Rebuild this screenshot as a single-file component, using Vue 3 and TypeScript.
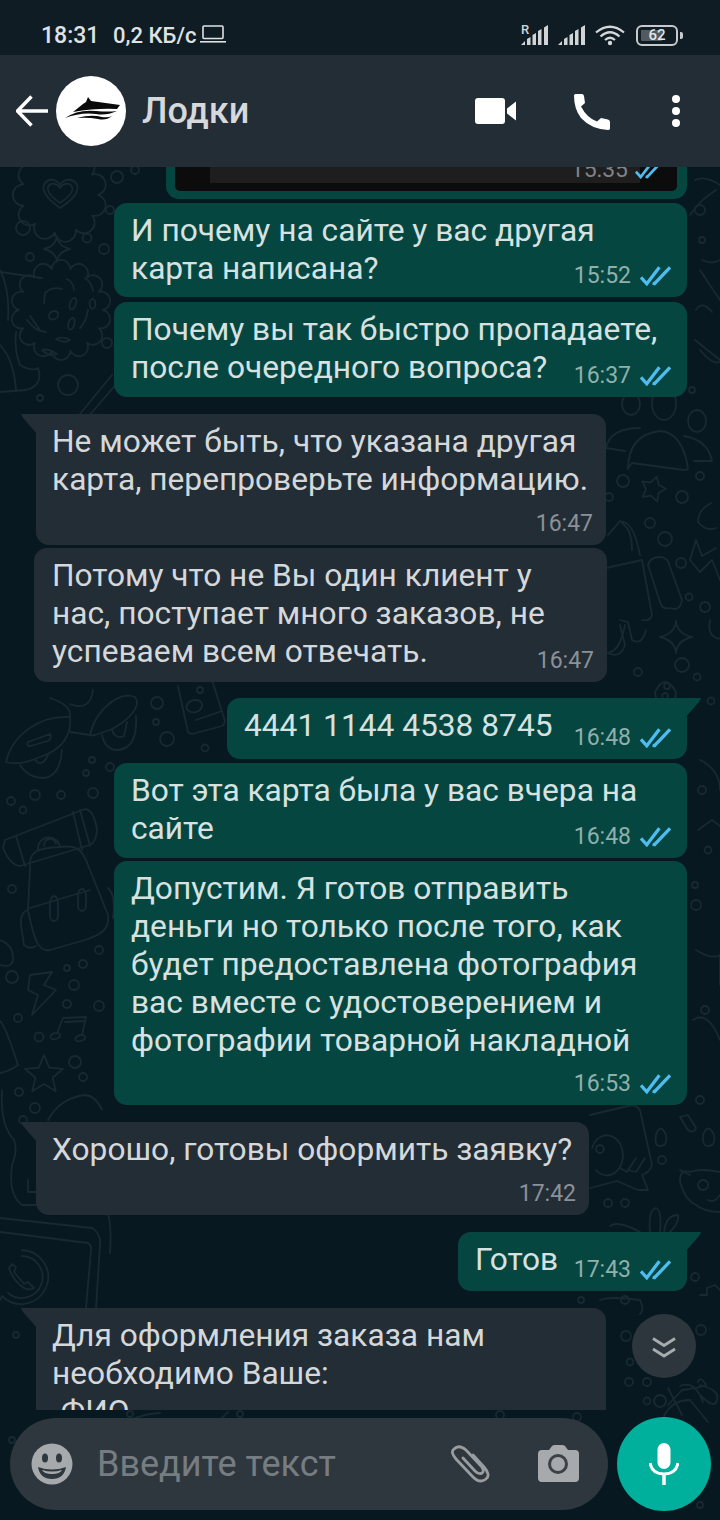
<script setup lang="ts">
interface Msg { id: number; out: boolean; text: string; time: string; w: number; h: number; gap: number; left?: number; tail?: boolean }

const messages: Msg[] = [
  { id: 1, out: true, text: 'И почему на сайте у вас другая\nкарта написана?', time: '15:52', w: 573, h: 94, gap: 4 },
  { id: 2, out: true, text: 'Почему вы так быстро пропадаете,\nпосле очередного вопроса?', time: '16:37', w: 573, h: 95, gap: 5 },
  { id: 3, out: false, text: 'Не может быть, что указана другая\nкарта, перепроверьте информацию.', time: '16:47', w: 570, h: 131, gap: 17, left: 36, tail: true },
  { id: 4, out: false, text: 'Потому что не Вы один клиент у\nнас, поступает много заказов, не\nуспеваем всем отвечать.', time: '16:47', w: 573, h: 134, gap: 3, left: 34 },
  { id: 5, out: true, text: '4441 1144 4538 8745', time: '16:48', w: 460, h: 61, gap: 16, tail: true },
  { id: 6, out: true, text: 'Вот эта карта была у вас вчера на\nсайте', time: '16:48', w: 573, h: 95, gap: 4 },
  { id: 7, out: true, text: 'Допустим. Я готов отправить\nденьги но только после того, как\nбудет предоставлена фотография\nвас вместе с удостоверением и\nфотографии товарной накладной', time: '16:53', w: 573, h: 244, gap: 3 },
  { id: 8, out: false, text: 'Хорошо, готовы оформить заявку?', time: '17:42', w: 553, h: 93, gap: 17, left: 36, tail: true },
  { id: 9, out: true, text: 'Готов', time: '17:43', w: 229, h: 59, gap: 17, tail: true },
  { id: 10, out: false, text: 'Для оформления заказа нам\nнеобходимо Ваше:\n-ФИО', time: '', w: 570, h: 140, gap: 17, left: 36, tail: true },
]

function bubbleStyle(m: Msg) {
  return {
    width: m.w + 'px',
    height: m.h + 'px',
    marginTop: m.gap + 'px',
    marginLeft: m.out ? undefined : m.left + 'px',
    paddingLeft: m.out ? undefined : 52 - (m.left as number) + 'px',
  }
}

function scallop(cx: number, cy: number, r: number, n: number): string {
  let d = ''
  const rb = (Math.PI * r) / n * 0.72
  for (let i = 0; i <= n; i++) {
    const a = (i / n) * Math.PI * 2
    const x = (cx + r * Math.cos(a)).toFixed(1)
    const y = (cy + r * Math.sin(a)).toFixed(1)
    d += i === 0 ? `M${x} ${y}` : ` A${rb.toFixed(1)} ${rb.toFixed(1)} 0 0 1 ${x} ${y}`
  }
  return d + 'Z'
}

function star(cx: number, cy: number, R: number, r: number, rot: number): string {
  const pts: string[] = []
  for (let i = 0; i < 10; i++) {
    const rad = i % 2 === 0 ? R : r
    const a = rot + (i * Math.PI) / 5 - Math.PI / 2
    pts.push(`${(cx + rad * Math.cos(a)).toFixed(1)} ${(cy + rad * Math.sin(a)).toFixed(1)}`)
  }
  return 'M' + pts.join(' L') + 'Z'
}

function sparkle(cx: number, cy: number, s: number): string {
  const k = s * 0.22
  return `M${cx} ${cy - s} Q${cx + k * 0.3} ${cy - k} ${cx + s} ${cy} Q${cx + k * 0.3} ${cy + k} ${cx} ${cy + s} Q${cx - k * 0.3} ${cy + k} ${cx - s} ${cy} Q${cx - k * 0.3} ${cy - k} ${cx} ${cy - s}Z`
}

const circles: number[][] = [
  [117, 177, 6], [23, 228, 7], [87, 238, 4.5], [104, 249, 5], [30, 257, 4], [110, 210, 4], [135, 170, 4],
  [107, 343, 5], [68, 385, 10], [40, 398, 3],
  [157, 703, 6], [156, 722, 3], [167, 739, 7], [205, 748, 3.5], [92, 760, 3], [86, 773, 3], [110, 767, 4],
  [93, 793, 5], [35, 795, 5], [61, 795, 4], [11, 801, 4], [23, 810, 3.5], [12, 889, 4], [99, 950, 4],
  [67, 968, 3], [83, 964, 4], [12, 977, 6], [74, 985, 5],
  [18, 1018, 4], [39, 1037, 4.5], [75, 1062, 6], [83, 1077, 4], [19, 1092, 4], [35, 1108, 5], [23, 1120, 4], [67, 1004, 4], [99, 1006, 5],
  [623, 481, 6], [700, 476, 4], [682, 497, 6], [609, 497, 4], [650, 523, 5], [665, 539, 7], [681, 563, 5],
  [689, 597, 3.5], [638, 672, 4], [682, 665, 7], [697, 677, 3.5], [711, 701, 3.5], [667, 686, 3],
  [662, 1160, 4], [608, 1203, 4], [625, 1203, 4], [692, 390, 3],
  [625, 1300, 4], [581, 1300, 3], [626, 1336, 5], [630, 1362, 3.5], [629, 1382, 4], [647, 1382, 4], [647, 1401, 3.5],
  [701, 1330, 5], [695, 1277, 4], [700, 1505, 3], [16, 1335, 3], [12, 1440, 3], [130, 1414, 3], [240, 1414, 3], [500, 1415, 4], [577, 1417, 4],
  [700, 210, 5], [702, 240, 3], [696, 905, 5], [705, 1010, 4], [700, 1100, 4], [702, 790, 4], [695, 885, 3], [708, 850, 3.5], [200, 690, 3],
]

const paths: string[] = [
  scallop(60, 195, 38, 11),
  'M60 208 C46 198 42 191 44 185 C47 178 56 178 60 185 C64 178 74 178 77 185 C79 191 74 199 60 208Z',
  'M60 203 C50 196 47 191 48 187 C50 182 57 183 60 188 C63 183 70 182 72 187 C74 191 70 196 60 203Z',
  sparkle(57, 249, 13),
  scallop(61, 310, 42, 14),
  'M45 293 Q52 286 62 289 M45 293 L44 303',
  'M67 279 Q74 283 74 290',
  'M85 278 Q92 283 93 291',
  'M74 298 a3 6 20 1 0 1 0Z',
  'M92 299 a3 5 0 1 0 1 0Z',
  'M54 311 a5 4 -30 1 0 1 0Z',
  'M72 318 a3 6 15 1 0 1 0Z',
  'M88 310 Q86 322 80 328',
  'M27 320 Q36 332 46 332 M30 316 L40 330',
  'M56 339 Q64 336 70 340 Q64 344 56 339Z',
  'M42 350 Q50 358 57 354 Q48 348 42 350Z',
  'M0 270 Q10 290 8 320 M0 272 L42 278',
  'M0 345 Q14 360 16 390 M16 332 Q14 350 20 365 Q32 372 38 368 Q44 385 26 390 L0 392',
  'M75 420 L112 375 M82 424 L118 382 M75 420 Q78 428 88 430',
  'M6 762 C12 735 40 715 70 717 C72 735 62 750 40 757 Q20 766 6 762Z',
  'M28 742 L50 734 Q52 738 48 741 L30 746 Q26 746 28 742Z',
  'M20 765 Q28 778 44 778 Q60 776 62 750',
  'M35 760 Q42 768 48 755',
  'M70 717 Q72 705 50 698 M70 732 L90 735',
  'M90 735 C95 710 120 690 135 697 C142 705 130 720 110 730 C100 733 92 737 90 735Z',
  'M102 735 Q105 750 118 750 Q138 748 136 716',
  'M112 730 Q116 740 124 736 L127 722',
  'M93 690 Q90 712 70 704',
  'M5 840 L85 809 Q94 810 97 830 Q96 842 90 845 L20 866 Q10 865 3 848Z',
  'M16 836 L25 866 M73 812 L82 850 M80 810 L90 846',
  'M30 868 C28 850 40 848 60 847 C75 845 82 848 88 865 L108 915 C110 930 100 935 85 940 L50 950 C40 952 35 945 28 910Z',
  'M38 850 a11 11 0 0 1 22 -3 M44 846 a6 6 0 0 1 12 -2',
  'M30 908 L90 890 M108 888 Q116 895 113 918 M28 910 Q20 912 21 925 L24 945 Q30 950 36 946',
  'M50 904 a4 8 0 0 1 8 0 v12 a4 5 0 0 1 -8 0Z',
  'M78 896 a4 6 0 0 1 8 -2 v12 a4 5 0 0 1 -8 0Z',
  'M178 686 L188 732 Q190 735 196 733 L222 726 Q226 724 224 718 L212 680',
  'M195 700 a8 6 -15 1 0 1 0Z M196 720 L222 711',
  'M30 975 L52 972 L44 985 L56 990 L32 1015 L38 995 L28 990Z',
  'M0 940 Q14 945 13 960 Q12 968 0 965',
  star(44, 1075, 20, 9, 0),
  'M57 1033 L63 1018 L86 1017 L82 1035 M65 1022 L85 1021',
  'M57 1033 a5 3 -15 1 1 -1 0Z M82 1035 a5 3 -15 1 1 -1 0Z',
  'M0 1021 Q5 1025 18 1065 Q8 1072 0 1073',
  'M2 1090 Q0 1125 14 1140 Q18 1150 12 1165 Q8 1195 22 1205 L36 1205',
  'M48 1120 Q60 1098 85 1095 Q96 1096 102 1110 M28 1180 v12 h8',
  'M0 1218 L92 1228 Q101 1233 100 1245 L96 1308 M0 1232 L88 1243 Q92 1246 91 1250 L86 1308',
  'M22 1250 a27 27 0 1 1 -20 46 L0 1300 M22 1256 a21 21 0 1 1 -14 37',
  'M9 1268 Q12 1278 20 1285 Q28 1292 34 1288 L28 1282 L24 1284 L14 1272 L16 1267 L12 1264Z',
  'M110 1253 Q112 1225 107 1210 M110 1205 Q100 1195 93 1185 Q90 1170 104 1158',
  'M622 404 a9 11 0 1 0 18 0 a9 11 0 1 0 -18 0Z',
  'M652 404 a12 16 0 1 0 24 0 a12 18 0 1 0 -24 0Z',
  'M688 421 a9 11 0 1 0 18 0 a9 11 0 1 0 -18 0Z',
  'M628 469 Q628 435 660 431 Q682 432 688 468 Q688 470 684 470 L632 463Q628 468 628 469Z',
  'M606 448 Q610 428 640 428 M606 448 L625 451 M684 436 Q708 440 712 461 L694 461',
  star(653, 489, 13, 7, 0.3),
  'M608 535 L620 521 L624 522 Q634 525 640 555 M622 523 Q632 530 632 550',
  'M606 568 L642 560 L652 615 Q650 622 642 620 M620 620 L628 622 L632 640 Q642 646 646 630 M625 625 Q620 650 610 652 M606 652 Q620 660 625 645 L620 625',
  'M648 565 Q650 557 660 557 Q668 557 670 567 L682 600 Q680 612 670 608 Q662 610 660 602Z',
  sparkle(676, 637, 16),
  'M696 540 L690 560 L700 572 L712 560 L720 580 M696 540 L702 556 L716 548',
  'M711 503 Q698 510 698 522 Q706 532 716 528',
  'M655 692 Q665 672 676 692 Q676 702 668 712 Q655 702 655 692Z M665 693 a3 3 0 1 0 .1 0Z',
  'M705 612 a5 5 0 1 1 .1 0Z M710 620 Q708 630 712 635 Q718 640 720 638',
  'M590 1115 L632 1105 Q636 1105 640 1110 L652 1165 Q650 1172 642 1175 L648 1190 L638 1190 L617 1181 L590 1188',
  'M620 1168 L627 1172 L636 1158 M628 1170 L636 1172 L645 1158',
  'M592 1148 a16 20 0 1 1 4 22 M600 1145 a4 4 0 1 1 -.1 0',
  'M656 1135 Q660 1122 666 1135 Q668 1146 660 1146 Q654 1146 656 1135Z',
  'M703 1135 Q708 1122 714 1135 Q716 1146 708 1146 Q702 1146 703 1135Z',
  'M680 1117 L688 1115 L696 1128 Q694 1134 688 1130Z',
  'M680 1182 Q680 1168 690 1172 Q700 1168 720 1172 M680 1182 Q685 1200 696 1205 Q705 1212 720 1212 M690 1175 L680 1170',
  'M703 1190 a5 5 0 1 1 .1 0Z M708 1200 Q714 1204 720 1195',
  'M650 1232 Q648 1210 656 1208 Q662 1210 660 1232 M664 1232 Q666 1215 678 1215 Q680 1222 668 1234 M610 1226 Q618 1220 640 1232',
  'M600 1300 Q610 1296 640 1300 Q645 1310 640 1314 M700 1295 L707 1295 L707 1288 L715 1285 L720 1290',
  'M668 1405 L682 1390 Q700 1388 706 1385 Q700 1375 698 1382 M664 1416 Q672 1400 690 1400 L708 1422',
  'M660 1395 a6 6 0 1 0 .1 0Z M668 1388 L682 1415',
  'M680 1386 Q695 1380 703 1402 M700 1395 Q715 1410 717 1400 Q720 1390 700 1385',
  'M690 215 Q700 200 716 190 M695 180 Q705 175 720 185',
  'M702 260 Q712 265 720 260 M700 270 L720 300 M695 340 L720 360 M700 350 Q712 365 720 362',
  'M696 310 Q702 300 712 312',
  'M700 760 Q720 770 720 790 M698 830 L712 820 L720 826 M696 950 Q712 960 720 955 L720 985 M693 1020 Q708 1010 720 1040',
  'M120 1430 Q130 1415 160 1413 M220 1420 L228 1412',
]
</script>

<template>
  <div class="phone">
    <div class="status">
      <div class="status-left">
        <span class="clock">18:31</span>
        <span class="speed">0,2 КБ/с</span>
        <svg class="laptop" viewBox="0 0 26 18" width="26" height="18" fill="none" stroke="#dfe2e4" stroke-width="1.6">
          <rect x="3" y="1" width="20" height="12.5" rx="1" />
          <path d="M0 16.8H26" />
        </svg>
      </div>
      <div class="status-right">
        <span class="sim">
          <span class="r">R</span>
          <svg viewBox="0 0 28 20" width="28" height="20" fill="#d0d4d6">
            <path d="M0 20l4-4v4zM6 14l3.5-2v8H6zM11.5 10l3.5-2v12h-3.500zM17 6l3.500-2v16H17zM23 2.500L27 0v20h-4z" />
          </svg>
        </span>
        <svg viewBox="0 0 28 20" width="28" height="20" fill="#d0d4d6">
          <path d="M0 20l4-4v4zM6 14l3.500-2v8H6zM11.500 10l3.500-2v12h-3.500zM17 6l3.500-2v16H17zM23 2.500L27 0v20h-4z" />
        </svg>
        <svg viewBox="0 0 30 22" width="30" height="22" fill="none" stroke="#d4d8da" stroke-width="2.200">
          <path d="M1 8.500Q15-3 29 8.500M5.500 12.500Q15 4 24.500 12.500M10 16Q15 11.500 20 16" />
          <circle cx="15" cy="19" r="2.200" fill="#d4d8da" stroke="none" />
        </svg>
        <span class="battery">
          <span class="battery-fill"></span>
          <span class="battery-text">62</span>
        </span>
        <span class="battery-nub"></span>
      </div>
    </div>

    <header class="header">
      <svg class="back" viewBox="0 0 32 32" width="32" height="32" fill="none" stroke="#fff" stroke-width="3.400">
        <path d="M32 16H2M15.500 1.500L1.500 16l14 14.500" />
      </svg>
      <div class="avatar">
        <svg viewBox="0 0 70 70" width="70" height="70" fill="#0a0a0a">
          <path d="M17 36L27 28L30 26L32 21L35 25L64 29L61 33Q40 32 17 36Z" />
          <path d="M9 42Q22 33 40 35Q52 36 61 35Q50 40 40 38Q25 36 9 42Z" />
          <path d="M21 42Q35 38 46 41Q52 42 56 40Q50 45 42 43Q32 41 21 42Z" />
        </svg>
      </div>
      <span class="title">Лодки</span>
      <svg class="video" viewBox="0 0 41 26" width="41" height="26" fill="#fff">
        <rect x="0" y="0" width="30" height="26" rx="3" />
        <path d="M32 10.500L41 3.500v19l-9-7z" />
      </svg>
      <svg class="call" viewBox="0 0 37 37" width="37" height="37" fill="#fff">
        <path d="M1 2.500Q1 1 2.500 1H9Q10.500 1 11 3L12 10L8 13.500Q14 25 24 28.500L28 25L35 26.500Q37 27 37 29V35.500Q37 37 35 37Q18 36 8 25Q1 16 1 2.500Z" />
      </svg>
      <div class="dots"><i></i><i></i><i></i></div>
    </header>

    <main class="chat">
      <svg class="doodles" viewBox="0 167 720 1353" width="720" height="1353" fill="none" stroke="#182932" stroke-width="1.800" stroke-linejoin="round" stroke-linecap="round" aria-hidden="true">
        <circle v-for="(c, i) in circles" :key="'c' + i" :cx="c[0]" :cy="c[1]" :r="c[2]" />
        <path v-for="(d, i) in paths" :key="'p' + i" :d="d" />
      </svg>

      <div class="messages">
        <div class="image-bubble">
          <div class="image-frame">
            <div class="image-inner"></div>
            <span class="image-time">15:35</span>
            <svg class="ticks image-ticks" viewBox="0 0 32 20" width="26" height="17" fill="none" stroke="#4fbcf0" stroke-width="3.400">
              <path d="M1 11.500L7 18L20 1M13 17.500L15 18L31 1" />
            </svg>
          </div>
        </div>

        <div
          v-for="m in messages"
          :key="m.id"
          class="bubble"
          :class="[m.out ? 'out' : 'in', { tail: m.tail }]"
          :style="bubbleStyle(m)"
        >
          <div class="text">
            <div v-for="(line, i) in m.text.split('\n')" :key="i" class="line">{{ line }}</div>
          </div>
          <div v-if="m.time" class="meta">
            <span class="time">{{ m.time }}</span>
            <svg v-if="m.out" class="ticks" viewBox="0 0 32 20" width="31" height="20" fill="none" stroke="#4fbcf0" stroke-width="3.400">
              <path d="M1 11.500L7 18L20 1M13 17.500L15 18L31 1" />
            </svg>
          </div>
        </div>
      </div>

      <button class="scroll-down">
        <svg viewBox="0 0 24 24" width="26" height="24" fill="none" stroke="#a8acae" stroke-width="2.800">
          <path d="M1 2.500L12 9.500L23 2.500M1 13L12 20L23 13" />
        </svg>
      </button>

      <footer class="composer">
        <div class="pill">
          <svg class="emoji" viewBox="0 0 42 42" width="42" height="42">
            <circle cx="21" cy="21" r="20.500" fill="#a7aaac" />
            <ellipse cx="14" cy="15" rx="3" ry="4.500" fill="#2e373d" />
            <ellipse cx="28" cy="15" rx="3" ry="4.500" fill="#2e373d" />
            <path d="M7 24Q21 29 35 24Q33 36 21 36Q9 36 7 24Z" fill="#2e373d" />
            <path d="M11 27Q21 30 31 27Q29 31 21 31Q13 31 11 27Z" fill="#a7aaac" />
          </svg>
          <span class="placeholder">Введите текст</span>
          <svg class="clip" viewBox="0 0 42 38" width="42" height="38" fill="none" stroke="#9a9da0" stroke-width="2.800" stroke-linecap="round">
            <path d="M23 10L34 22Q41 30 36 34Q30 39 23 32L6 14Q0 7 4 4Q9-1 16 5L31 21Q35 26 32 28Q29 30 25 26L13 13" />
          </svg>
          <svg class="camera" viewBox="0 0 41 37" width="41" height="37">
            <path d="M4 5H11L14 1Q15 0 17 0H24Q26 0 27 1L30 5H37Q41 5 41 9V33Q41 37 37 37H4Q0 37 0 33V9Q0 5 4 5Z" fill="#a7aaac" />
            <circle cx="20" cy="19" r="8.500" fill="none" stroke="#3a4248" stroke-width="3" />
          </svg>
        </div>
        <button class="mic">
          <svg viewBox="0 0 30 42" width="30" height="42" fill="none">
            <rect x="8.500" y="0" width="13" height="26" rx="6.500" fill="#fff" />
            <path d="M1 20Q3 31 15 31Q27 31 29 20" stroke="#fff" stroke-width="3" />
            <path d="M15 31V42" stroke="#fff" stroke-width="3.500" />
          </svg>
        </button>
      </footer>
    </main>
  </div>
</template>

<style scoped>
.phone {
  width: 720px;
  height: 1520px;
  display: flex;
  flex-direction: column;
  overflow: hidden;
  background: #081820;
  font-family: Roboto, "Noto Sans", sans-serif;
}
.status {
  height: 55px;
  flex: none;
  background: #101c23;
  display: flex;
  justify-content: space-between;
  align-items: center;
  padding: 15px 37px 0 41px;
  box-sizing: border-box;
}
.status-left {
  display: flex;
  align-items: center;
  color: #dfe2e4;
  font-weight: 500;
  font-size: 22px;
}
.clock { font-size: 23px; width: 72px; }
.speed { width: 87px; }
.laptop { margin-top: -3px; }
.status-right {
  display: flex;
  align-items: center;
  gap: 9px;
}
.sim { position: relative; display: flex; }
.r {
  position: absolute;
  left: 0;
  top: -1px;
  font-size: 13px;
  font-weight: 500;
  line-height: 12px;
  color: #d0d4d6;
}
.battery {
  position: relative;
  width: 42px;
  height: 21px;
  margin-left: 2px;
  border: 2px solid #c6cacc;
  border-radius: 6px;
  box-sizing: border-box;
  display: flex;
  align-items: center;
  justify-content: center;
}
.battery-fill {
  position: absolute;
  left: 3px;
  top: 3px;
  bottom: 3px;
  width: 21px;
  background: #505a60;
  border-radius: 1px;
}
.battery-text {
  position: relative;
  font-size: 15px;
  font-weight: 500;
  color: #e3e6e8;
}
.battery-nub {
  width: 3px;
  height: 7px;
  margin-left: -7px;
  background: #c6cacc;
  border-radius: 0 2px 2px 0;
}
.header {
  height: 112px;
  flex: none;
  background: #232d36;
  display: flex;
  align-items: center;
  padding-left: 16px;
  box-sizing: border-box;
  position: relative;
  z-index: 2;
}
.avatar {
  width: 70px;
  height: 70px;
  margin-left: 8px;
  border-radius: 50%;
  background: #fff;
  flex: none;
}
.avatar svg { display: block; }
.title {
  margin-left: 16px;
  font-size: 36px;
  font-weight: 500;
  color: #d6d8db;
  width: 333px;
}
.video { flex: none; }
.call { margin-left: 57px; flex: none; }
.dots {
  margin-left: 62px;
  display: flex;
  flex-direction: column;
  gap: 4px;
}
.dots i {
  width: 8px;
  height: 8px;
  border-radius: 50%;
  background: #fff;
}
.chat {
  flex: 1;
  position: relative;
  display: flex;
  flex-direction: column;
  min-height: 0;
  overflow: hidden;
}
.doodles {
  position: absolute;
  left: 0;
  top: 0;
}
.messages {
  position: relative;
  height: 1243px;
  flex: none;
  overflow: hidden;
  display: flex;
  flex-direction: column;
  align-items: flex-start;
}
.image-bubble {
  align-self: flex-end;
  width: 521px;
  height: 32px;
  flex: none;
  margin-right: 33px;
  background: #054640;
  border-radius: 0 0 13px 13px;
  padding: 0 10px 8px 9px;
  box-sizing: border-box;
}
.image-frame {
  position: relative;
  height: 24px;
  background: #0c0c0c;
  border-radius: 0 0 5px 5px;
}
.image-inner {
  margin-left: 35px;
  width: 430px;
  height: 16px;
  background: #1e1e1e;
}
.image-time {
  position: absolute;
  right: 49px;
  top: -10px;
  font-size: 23px;
  line-height: 26px;
  color: #7f8386;
}
.image-ticks {
  position: absolute;
  right: 16px;
  top: -5px;
}
.bubble {
  position: relative;
  flex: none;
  display: grid;
  box-sizing: border-box;
  padding: 9px 16px 8px 17px;
  border-radius: 13px;
}
.bubble.out {
  align-self: flex-end;
  margin-right: 33px;
  background: #054640;
  color: #d7e2e0;
}
.bubble.in {
  background: #232d36;
  color: #d5d8da;
  padding-right: 13px;
}
.tail.in { border-top-left-radius: 0; }
.tail.out { border-top-right-radius: 0; }
.tail::before {
  content: "";
  position: absolute;
  top: 0;
  width: 16px;
  height: 20px;
  background: inherit;
}
.tail.in::before {
  left: -15px;
  clip-path: polygon(0 0, 100% 0, 100% 100%, 2px 4px);
}
.tail.out::before {
  right: -14px;
  clip-path: polygon(0 0, 100% 0, 14px 4px, 0 100%);
}
.text {
  grid-area: 1 / 1;
  font-size: 31.700px;
  line-height: 38px;
}
.line {
  width: fit-content;
  white-space: nowrap;
}
.meta {
  grid-area: 1 / 1;
  align-self: end;
  justify-self: end;
  display: flex;
  align-items: center;
  gap: 9px;
  height: 26px;
}
.time {
  font-size: 23px;
  line-height: 26px;
}
.out .time { color: #8fb0ac; }
.in .time { color: #8b9196; }
.ticks { flex: none; }
.scroll-down {
  position: absolute;
  left: 632px;
  top: 1147px;
  width: 64px;
  height: 64px;
  border: none;
  padding: 3px 0 0;
  border-radius: 50%;
  background: #2c363c;
  display: flex;
  align-items: center;
  justify-content: center;
  box-sizing: border-box;
}
.composer {
  position: relative;
  flex: none;
  display: flex;
  align-items: center;
  gap: 9px;
  padding: 7px 9px 9px 10px;
}
.pill {
  width: 598px;
  height: 92px;
  flex: none;
  box-sizing: border-box;
  padding-left: 21px;
  border-radius: 46px;
  background: #2e373d;
  display: flex;
  align-items: center;
}
.emoji { flex: none; }
.placeholder {
  margin-left: 24px;
  width: 353px;
  font-size: 36px;
  color: #767d82;
  flex: none;
}
.clip { flex: none; }
.camera { flex: none; margin-left: 46px; margin-top: -2px; }
.mic {
  width: 94px;
  height: 94px;
  flex: none;
  border: none;
  padding: 0;
  border-radius: 50%;
  background: #00af9c;
  display: flex;
  align-items: center;
  justify-content: center;
}
</style>

<style>
html, body {
  margin: 0;
  background: #081820;
}
</style>
